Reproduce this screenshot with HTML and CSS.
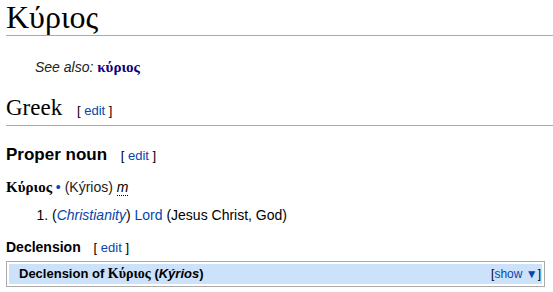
FILE: index.html
```html
<!DOCTYPE html>
<html lang="el">
<head>
    <meta charset="UTF-8">
    <title>Κύριος - Wiktionary</title>
    <link rel="stylesheet" href="styles.css">
</head>
<body>
    <div class="content">
        <h1 class="page-title">Κύριος</h1>
        <p class="see-also"><i>See also:</i> <a class="greek visited" href="#">κύριος</a></p>

        <h2>Greek <span class="edit">[ <a href="#">edit</a> ]</span></h2>

        <h3>Proper noun <span class="edit">[ <a href="#">edit</a> ]</span></h3>
        <p class="headword"><b class="greek">Κύριος</b> <span class="dot">•</span> <span class="translit">(Kýrios)</span> <abbr class="gender" title="masculine">m</abbr></p>
        <ol class="senses">
            <li>(<i><a href="#">Christianity</a></i>) <a href="#">Lord</a> (Jesus Christ, God)</li>
        </ol>

        <h4>Declension <span class="edit">[ <a href="#">edit</a> ]</span></h4>
        <div class="navframe">
            <div class="navhead">
                <span class="navtitle">Declension of <span class="greek">Κύριος</span> (<i>Kýrios</i>)</span>
                <span class="navtoggle">[<a href="#">show ▼</a>]</span>
            </div>
        </div>
    </div>
</body>
</html>
```

FILE: styles.css
```css
body {
    margin: 0;
    padding: 0;
    background: #fff;
    color: #000;
    font-family: 'Liberation Sans', Arial, sans-serif;
    font-size: 14px;
}
a {
    color: #0645ad;
    text-decoration: none;
}
a.visited {
    color: #0b0080;
}
.content {
    padding: 0 0 0 6px;
}
.greek {
    font-family: 'Liberation Serif', 'Times New Roman', serif;
    font-size: 15px;
    font-weight: bold;
}
.page-title {
    font-family: 'Liberation Serif', 'Times New Roman', serif;
    font-weight: normal;
    font-size: 32px;
    line-height: 35px;
    margin: 0;
    border-bottom: 1px solid #aaa;
}
.see-also {
    margin: 21px 0 0 29px;
    line-height: 20px;
    color: #222;
}
h2 {
    font-family: 'Liberation Serif', 'Times New Roman', serif;
    font-weight: normal;
    font-size: 23px;
    line-height: 28px;
    margin: 17px 0 0;
    border-bottom: 1px solid #aaa;
}
h3 {
    font-size: 17px;
    font-weight: bold;
    line-height: 22px;
    margin: 18px 0 0;
}
h4 {
    font-size: 14px;
    font-weight: bold;
    line-height: 20px;
    margin: 12px 0 0;
}
.edit {
    font-family: 'Liberation Sans', Arial, sans-serif;
    font-size: 13px;
    font-weight: normal;
    margin-left: 9px;
}
.headword {
    margin: 10px 0 0;
    line-height: 20px;
}
.dot {
    color: #0645ad;
}
.translit {
    color: #222;
}
.gender {
    font-style: italic;
    text-decoration: none;
    border-bottom: 1px dotted #000;
}
.senses {
    margin: 8px 0 0;
    padding-left: 46px;
    line-height: 20px;
}
.navframe {
    margin-top: 3px;
    border: 1px solid #aaa;
    padding: 2px;
    width: 533px;
    font-size: 13px;
}
.navhead {
    background: #cce2fa;
    padding: 0 1px 0 10px;
    display: flex;
    justify-content: space-between;
    align-items: center;
    line-height: 20px;
}
.navtitle {
    font-weight: bold;
}
.navtitle .greek {
    font-size: 14px;
}
.navtoggle {
    font-size: 12px;
}
```
